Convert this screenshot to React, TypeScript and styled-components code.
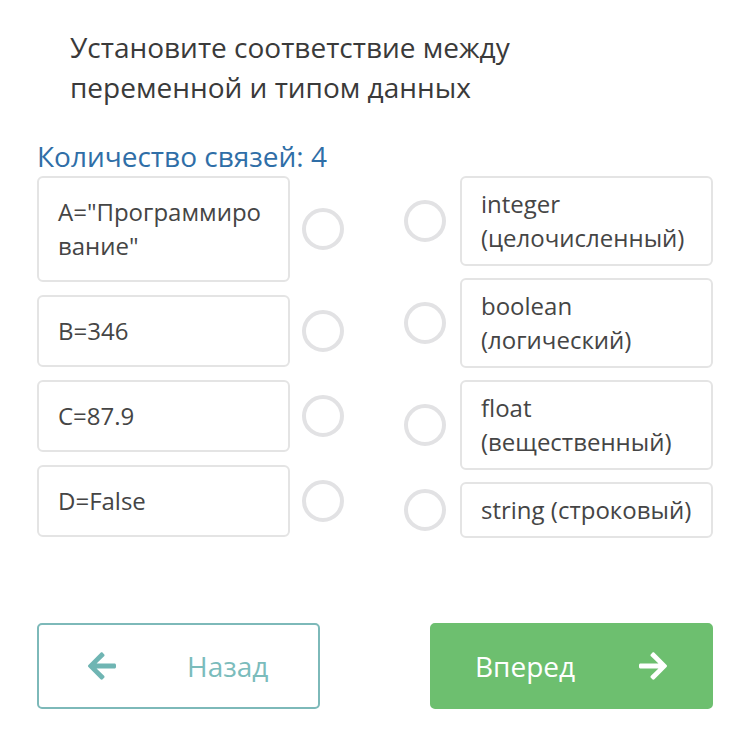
import React from "react";
import styled, { createGlobalStyle } from "styled-components";
import { FaArrowLeft, FaArrowRight } from "react-icons/fa";

const Global = createGlobalStyle`
  html, body { margin: 0; padding: 0; background: #ffffff; }
  body { font-family: "Open Sans", "Noto Sans", sans-serif; }
  * { box-sizing: border-box; }
`;

const Page = styled.div`
  width: 750px;
  height: 734px;
  padding: 27px 37px 0 37px;
  display: flex;
  flex-direction: column;
`;

const Heading = styled.h1`
  margin: 0 0 0 33px;
  font-size: 28px;
  line-height: 40px;
  font-weight: 400;
  color: #3a3a3a;
`;

const Counter = styled.div`
  margin-top: 32px;
  font-size: 28px;
  line-height: 34px;
  color: #2f6ea7;
`;

const Board = styled.div`
  margin-top: 3px;
  display: flex;
  justify-content: space-between;
`;

const Column = styled.div<{ $gap: number }>`
  display: flex;
  flex-direction: column;
  gap: ${(p) => p.$gap}px;
`;

const Row = styled.div<{ $reverse?: boolean }>`
  display: flex;
  align-items: center;
  flex-direction: ${(p) => (p.$reverse ? "row-reverse" : "row")};
  gap: ${(p) => (p.$reverse ? 14 : 12)}px;
`;

const Card = styled.div<{ $pad: number }>`
  width: 253px;
  padding: ${(p) => p.$pad}px 19px;
  border: 2px solid #e4e4e4;
  border-radius: 6px;
  font-size: 24px;
  line-height: 34px;
  color: #454545;
  overflow-wrap: anywhere;
`;

const Dot = styled.div`
  width: 42px;
  height: 42px;
  border-radius: 50%;
  border: 4px solid #e2e2e4;
  flex-shrink: 0;
`;

const Footer = styled.div`
  margin-top: 85px;
  display: flex;
  justify-content: space-between;
`;

const Button = styled.button<{ $primary?: boolean; $padLeft: number; $gap: number }>`
  width: 283px;
  height: 86px;
  border-radius: 5px;
  display: flex;
  align-items: center;
  padding: 0 0 0 ${(p) => p.$padLeft}px;
  gap: ${(p) => p.$gap}px;
  font-family: "Open Sans", "Noto Sans", sans-serif;
  font-size: 28px;
  cursor: pointer;
  border: 2px solid ${(p) => (p.$primary ? "#6dbf6f" : "#7db9b9")};
  background: ${(p) => (p.$primary ? "#6dbf6f" : "#ffffff")};
  color: ${(p) => (p.$primary ? "#ffffff" : "#7bbcbc")};
  svg { flex-shrink: 0; }
`;

const left = [
  'A="Программирование"',
  "B=346",
  "C=87.9",
  "D=False",
];

const right = [
  "integer (целочисленный)",
  "boolean (логический)",
  "float (вещественный)",
  "string (строковый)",
];

export default function App() {
  return (
    <>
      <Global />
      <Page>
        <Heading>
          Установите соответствие между
          <br />
          переменной и типом данных
        </Heading>
        <Counter>Количество связей: 4</Counter>
        <Board>
          <Column $gap={13}>
            {left.map((t) => (
              <Row key={t}>
                <Card $pad={17}>{t}</Card>
                <Dot />
              </Row>
            ))}
          </Column>
          <Column $gap={12}>
            {right.map((t) => (
              <Row key={t} $reverse>
                <Card $pad={9}>{t}</Card>
                <Dot />
              </Row>
            ))}
          </Column>
        </Board>
        <Footer>
          <Button $padLeft={47} $gap={69}>
            <FaArrowLeft size={32} color="#6fb5b3" />
            Назад
          </Button>
          <Button $primary $padLeft={43} $gap={62}>
            Вперед
            <FaArrowRight size={32} color="#ffffff" />
          </Button>
        </Footer>
      </Page>
    </>
  );
}
